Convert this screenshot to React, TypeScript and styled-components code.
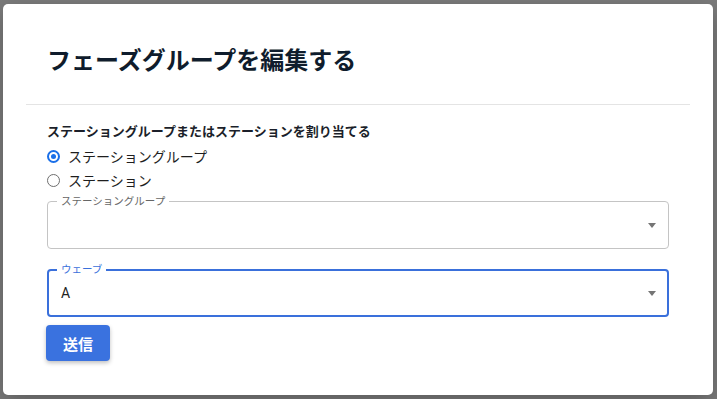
import React from "react";
import styled, { createGlobalStyle } from "styled-components";

const Global = createGlobalStyle`
  html, body { margin: 0; padding: 0; }
  body {
    width: 717px;
    height: 399px;
    overflow: hidden;
    background: #7b7b7b;
    font-family: Roboto, "Noto Sans CJK JP", sans-serif;
  }
`;

const Backdrop = styled.div`
  position: fixed;
  inset: 0;
  background: #7b7b7b;
  display: flex;
  align-items: center;
  justify-content: center;
`;

const Dialog = styled.div`
  width: 710px;
  height: 391px;
  margin-right: 1px;
  box-sizing: border-box;
  background: #ffffff;
  border-radius: 5px;
  box-shadow: 0 8px 24px rgba(0, 0, 0, 0.25);
  display: flex;
  flex-direction: column;
`;

const Header = styled.div`
  padding: 39px 44px 29px;
`;

const Title = styled.h2`
  margin: 0;
  font-family: "Noto Sans CJK JP", sans-serif;
  font-size: 24px;
  line-height: 32px;
  font-weight: 700;
  color: #0f1c2c;
`;

const Divider = styled.hr`
  margin: 0 23px;
  border: 0;
  border-top: 1px solid #e4e4e4;
`;

const Body = styled.form`
  padding: 16px 44px 0;
  display: flex;
  flex-direction: column;
`;

const GroupLabel = styled.div`
  font-family: "Noto Sans CJK JP", sans-serif;
  font-size: 13px;
  line-height: 20px;
  font-weight: 700;
  color: #1b1f2a;
  margin-bottom: 3px;
`;

const RadioRow = styled.label`
  display: flex;
  align-items: center;
  height: 24px;
  gap: 8px;
  font-family: "Noto Sans CJK JP", sans-serif;
  font-size: 14px;
  color: #1e1e1e;
`;

const RadioCircle = styled.span<{ $checked?: boolean }>`
  width: 13px;
  height: 13px;
  box-sizing: border-box;
  border-radius: 50%;
  border: ${(p) => (p.$checked ? "2px solid #1a6fe8" : "1px solid #6e6e6e")};
  display: flex;
  align-items: center;
  justify-content: center;
  &::after {
    content: "";
    width: 5px;
    height: 5px;
    border-radius: 50%;
    background: ${(p) => (p.$checked ? "#1a6fe8" : "transparent")};
  }
`;

const Field = styled.div<{ $focused?: boolean }>`
  position: relative;
  margin-top: ${(p) => (p.$focused ? "20px" : "9px")};
  padding: 0 ${(p) => (p.$focused ? "12px" : "13px")};
  height: 48px;
  box-sizing: border-box;
  border: ${(p) => (p.$focused ? "2px solid #3a70db" : "1px solid #c4c4c4")};
  border-radius: 4px;
  display: flex;
  align-items: center;
`;

const FloatLabel = styled.span<{ $focused?: boolean }>`
  position: absolute;
  top: ${(p) => (p.$focused ? "-9px" : "-8px")};
  left: ${(p) => (p.$focused ? "8px" : "9px")};
  padding: 0 4px;
  background: #fff;
  font-family: "Noto Sans CJK JP", sans-serif;
  font-size: 10.5px;
  line-height: 14px;
  color: ${(p) => (p.$focused ? "#3a70db" : "#666666")};
`;

const Value = styled.span`
  font-family: Roboto, sans-serif;
  font-size: 14px;
  color: #222;
`;

const Caret = styled.span`
  width: 0;
  height: 0;
  margin-left: auto;
  margin-right: -1px;
  border-left: 4px solid transparent;
  border-right: 4px solid transparent;
  border-top: 5px solid #757575;
`;

const SubmitButton = styled.button`
  align-self: flex-start;
  margin-top: 8px;
  margin-left: -1px;
  width: 64px;
  height: 36px;
  border: 0;
  border-radius: 4px;
  background: #3a72df;
  color: #fff;
  font-family: "Noto Sans CJK JP", sans-serif;
  font-size: 15px;
  font-weight: 700;
  box-shadow: 0 2px 4px rgba(0, 0, 0, 0.25);
  cursor: pointer;
`;

export default function App() {
  return (
    <>
      <Global />
      <Backdrop>
        <Dialog>
          <Header>
            <Title>フェーズグループを編集する</Title>
          </Header>
          <Divider />
          <Body onSubmit={(e) => e.preventDefault()}>
            <GroupLabel>ステーショングループまたはステーションを割り当てる</GroupLabel>
            <RadioRow>
              <RadioCircle $checked />
              ステーショングループ
            </RadioRow>
            <RadioRow>
              <RadioCircle />
              ステーション
            </RadioRow>
            <Field>
              <FloatLabel>ステーショングループ</FloatLabel>
              <Caret />
            </Field>
            <Field $focused>
              <FloatLabel $focused>ウェーブ</FloatLabel>
              <Value>A</Value>
              <Caret />
            </Field>
            <SubmitButton type="submit">送信</SubmitButton>
          </Body>
        </Dialog>
      </Backdrop>
    </>
  );
}
